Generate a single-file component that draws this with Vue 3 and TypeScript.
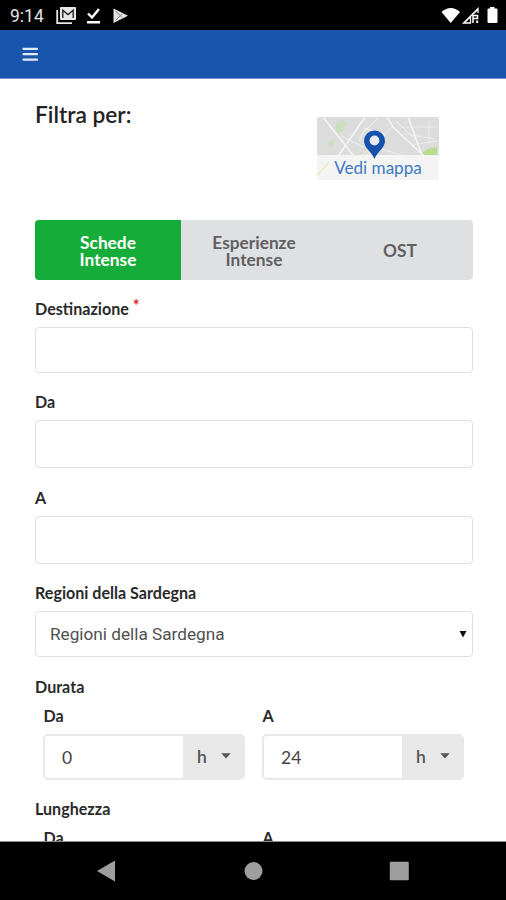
<script setup lang="ts">
import { ref } from 'vue'

interface Field { label: string; required?: boolean; tall?: boolean; wide?: boolean }
interface Range { label: string; values?: [string, string]; unit?: string }

const tabs: string[] = ['Schede Intense', 'Esperienze Intense', 'OST']
const activeTab = ref(0)
const fields: Field[] = [
  { label: 'Destinazione', required: true },
  { label: 'Da', tall: true },
  { label: 'A', tall: true, wide: true },
]
const ranges: Range[] = [
  { label: 'Durata', values: ['0', '24'], unit: 'h' },
  { label: 'Lunghezza' },
]
const ends: string[] = ['Da', 'A']
</script>

<template>
  <div class="screen">
    <div class="status">
      <span class="clock">9:14</span>
      <svg class="notif" width="76" height="20" viewBox="0 0 76 20">
        <path d="M1.2 4V17.2H16" fill="none" stroke="#e8e8e8" stroke-width="1.8" />
        <rect x="4" y="1" width="16" height="13" rx="1" fill="#e8e8e8" />
        <path d="M6.8 12V4.2L12 8.6L17.2 4.2V12" fill="none" stroke="#222" stroke-width="1.4" />
        <path d="M32 7.5L36 11.5L43 3" fill="none" stroke="#fff" stroke-width="2.4" />
        <rect x="31" y="15" width="13" height="2.5" fill="#fff" />
        <path d="M57.5 2.5L72 9.7L57.5 17Z" fill="#e4e4e4" />
        <path d="M59.5 5L66 11.5M59.5 14.5L66 8" stroke="#777" stroke-width=".9" fill="none" />
      </svg>
      <svg class="signal" width="58" height="20" viewBox="0 0 58 20">
        <path d="M1.5 6Q10.7-2 20 6L10.7 17Z" fill="#fff" />
        <path d="M38 7V2.5L23.5 17H30.5V10.8L25 16M31 10L37.2 4" fill="none" stroke="#fff" stroke-width="1.3" />
        <path d="M32.5 9.5H37.5V12.5H33.5M33 9V17" fill="none" stroke="#fff" stroke-width="1.5" />
        <rect x="36.2" y="14.5" width="2" height="2.5" fill="#fff" />
        <path d="M50 1H54.5V2.5H56.5Q57.5 2.5 57.5 3.5V16Q57.5 17 56.5 17H48.5Q47.5 17 47.5 16V3.5Q47.5 2.5 48.5 2.5H50Z" fill="#fff" />
      </svg>
    </div>

    <header class="bar">
      <svg width="16" height="16" viewBox="0 0 16 16">
        <path d="M1.5 2.8H15M1.5 8.2H15M1.5 13.7H15" stroke="#e4ebf8" stroke-width="2.2" stroke-linecap="round" />
      </svg>
    </header>

    <main class="page">
      <div class="top">
        <h1>Filtra per:</h1>
        <a class="map">
          <svg class="map-art" width="122" height="63" viewBox="0 0 122 63">
            <rect width="122" height="63" rx="2" fill="#dcdcdc" />
            <path d="M18 12L20 5L26 3L29 6L27 13L21 16ZM11 25L16 22L17 28L12 29Z" fill="#c9dfbd" />
            <path d="M104 38Q108 31 120 30V38Z" fill="#b9dc8e" />
            <g fill="none" stroke="#f5f5f5">
              <path d="M6 0L36 38M48 0L22 38L0 62M70 0L76 10L108 40M91 0L105 38" stroke-width="1.5" />
              <path d="M76 9L50 38M24 19L46 30M46 11L68 17M62 0L46 16L42 24M79 4L99 23M65 32L84 38" stroke-width=".8" />
              <path d="M84 10H120M88 17L118 22M112 4V26M94 28L120 24" stroke-width=".6" />
            </g>
            <rect y="38" width="122" height="25" fill="#f7f7f7" fill-opacity=".88" />
            <path d="M45 38L50 34L56 38M0 59L12 45" stroke="#efe8c0" stroke-width="1.3" fill="none" />
            <path d="M57.5 42C55 35 47 31 47 24A10.5 10.5 0 0 1 68 24C68 31 60 35 57.5 42Z" fill="#1551ad" />
            <circle cx="57.5" cy="23.5" r="4.9" fill="#e9eaed" />
          </svg>
          <span class="map-text">Vedi mappa</span>
        </a>
      </div>

      <nav class="tabs">
        <button
          v-for="(tab, i) in tabs"
          :key="tab"
          class="tab"
          :class="{ active: i === activeTab }"
          @click="activeTab = i"
        >{{ tab }}</button>
      </nav>

      <div v-for="f in fields" :key="f.label" class="field" :class="{ wide: f.wide }">
        <label>{{ f.label }}<span v-if="f.required" class="star">*</span></label>
        <input class="box" :class="{ tall: f.tall }" type="text" />
      </div>

      <div class="field">
        <label>Regioni della Sardegna</label>
        <div class="box select">
          <span>Regioni della Sardegna</span>
          <svg width="8" height="8" viewBox="0 0 8 8"><path d="M.5 1H7.5L4 7.5Z" fill="#111" /></svg>
        </div>
      </div>

      <section v-for="r in ranges" :key="r.label" class="range">
        <label>{{ r.label }}</label>
        <div class="pair">
          <div v-for="(end, i) in ends" :key="end" class="half">
            <label>{{ end }}</label>
            <div v-if="r.values" class="combo">
              <span class="value">{{ r.values[i] }}</span>
              <span class="unit">
                {{ r.unit }}
                <svg width="10" height="6" viewBox="0 0 10 6"><path d="M.3 .3H9.7L5 5.5Z" fill="#555" /></svg>
              </span>
            </div>
          </div>
        </div>
      </section>
    </main>

    <footer class="nav">
      <svg width="506" height="58" viewBox="0 0 506 58">
        <path d="M97 29L115 18.5V39.5Z" fill="#9e9e9e" />
        <circle cx="253.5" cy="29" r="9" fill="#9e9e9e" />
        <rect x="389.8" y="19.8" width="19" height="18.5" rx="1" fill="#9e9e9e" />
      </svg>
    </footer>
  </div>
</template>

<style>
body {
  margin: 0;
}
</style>

<style scoped>
.screen {
  width: 506px;
  height: 900px;
  display: flex;
  flex-direction: column;
  overflow: hidden;
  background: #fff;
  font-family: Lato, sans-serif;
  color: #222;
}
.screen * {
  box-sizing: border-box;
}
.status {
  flex: none;
  height: 30px;
  background: #000;
  display: flex;
  align-items: center;
  padding: 0 8px 0 10px;
}
.clock {
  width: 46px;
  color: #e4e4e4;
  font: 400 17.5px/30px Roboto, sans-serif;
  padding-top: 2px;
}
.notif {
  margin-top: 2px;
}
.signal {
  margin-left: auto;
  margin-top: 1px;
}
.bar {
  flex: none;
  height: 49px;
  background: #1756ac;
  border-bottom: 1px solid #7897ce;
  display: flex;
  align-items: center;
  padding-left: 22px;
}
.page {
  flex: 1;
  min-height: 0;
  overflow: hidden;
  padding: 0 33px 0 35px;
  border-bottom: 1px solid #8a8a8a;
}
.top {
  height: 141px;
  display: flex;
  justify-content: space-between;
  padding: 21px 34px 0 0;
}
h1 {
  margin: 0;
  font-size: 22.7px;
  line-height: 29px;
  font-weight: 600;
}
.map {
  display: grid;
  width: 122px;
  height: 63px;
  margin-top: 17px;
}
.map-art,
.map-text {
  grid-area: 1 / 1;
}
.map-text {
  align-self: end;
  text-align: center;
  color: #3d7ac2;
  font-size: 17.1px;
  line-height: 24px;
}
.tabs {
  height: 60px;
  display: grid;
  grid-template-columns: 146px 146px 146px;
  border-radius: 4px;
  overflow: hidden;
  background: #dfe0e1;
  margin-bottom: 20px;
}
.tab {
  border: 0;
  padding: 1px 28px 0;
  background: none;
  font: 700 17.3px/17px Lato, sans-serif;
  color: #5f6061;
}
.tab.active {
  background: #16ac39;
  color: #fff;
  padding: 1px 36px 0;
}
.field {
  margin-bottom: 20px;
}
.field.wide {
  margin-top: 21px;
}
label {
  display: block;
  height: 27px;
  font-size: 16.1px;
  line-height: 18px;
  font-weight: 700;
  color: #2a2a2a;
}
.star {
  color: #db2828;
  margin-left: 4px;
  position: relative;
  top: -3px;
}
.box {
  display: block;
  width: 438px;
  height: 46px;
  margin: 0;
  border: 1.5px solid #dedfe0;
  border-radius: 4px;
  background: #fff;
}
.box.tall {
  height: 48px;
}
.select {
  display: flex;
  align-items: center;
  justify-content: space-between;
  padding: 0 5px 0 14px;
  font: 400 17.2px/24px Roboto, sans-serif;
  color: #505050;
}
.range {
  height: 122px;
  padding-top: 1px;
}
.range > label {
  height: 29px;
}
.pair {
  display: grid;
  grid-template-columns: 202px 202px;
  gap: 17px;
  padding-left: 8px;
}
.half label {
  height: 27px;
  padding-left: 0.5px;
}
.combo {
  display: flex;
  height: 46px;
  border: 2px solid #e8e8e8;
  border-radius: 5px;
  overflow: hidden;
}
.value {
  flex: 1;
  padding: 1px 0 0 17px;
  font-size: 17.5px;
  line-height: 41px;
  color: #444;
}
.unit {
  width: 60px;
  background: #e8e8e8;
  display: flex;
  align-items: center;
  justify-content: space-between;
  padding: 0 12px 2px 14px;
  font-size: 17.5px;
  color: #555;
  font-weight: 600;
}
.nav {
  flex: none;
  height: 58px;
  background: #000;
}
.nav svg {
  display: block;
}
</style>
